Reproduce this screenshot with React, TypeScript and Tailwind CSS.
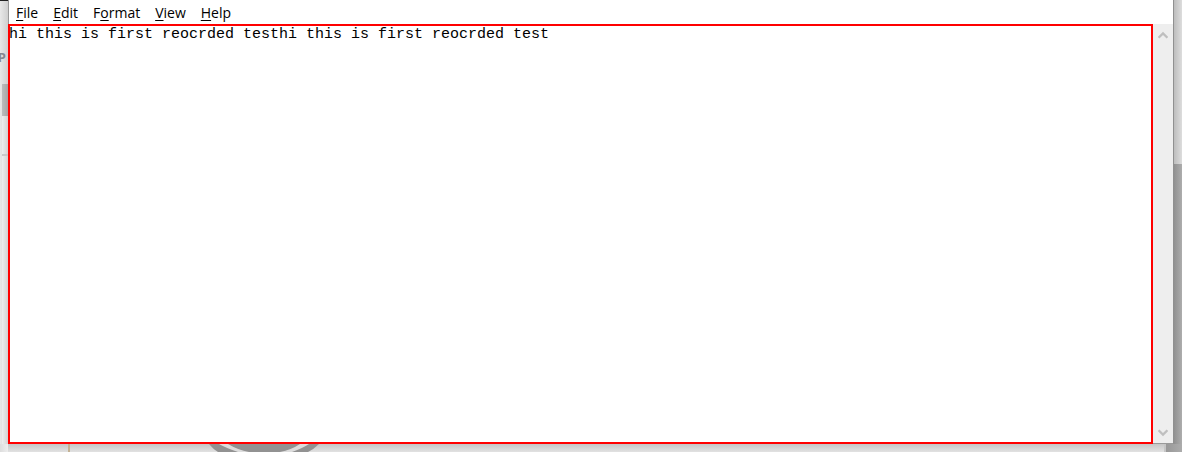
import React from "react";

const menus = [
  { before: "", key: "F", after: "ile" },
  { before: "", key: "E", after: "dit" },
  { before: "F", key: "o", after: "rmat" },
  { before: "", key: "V", after: "iew" },
  { before: "", key: "H", after: "elp" },
];

function MenuBar() {
  return (
    <nav aria-label="Menu" className="flex h-6 shrink-0 gap-[15px] border-l border-[#999999] bg-white pl-[7px] font-['Open_Sans',sans-serif] text-[14px] leading-[25px] text-black">
      {menus.map((m) => (
        <button key={m.key} type="button" className="whitespace-nowrap">
          {m.before}
          <span className="underline decoration-1 underline-offset-2">{m.key}</span>
          {m.after}
        </button>
      ))}
    </nav>
  );
}

function Chevron({ down = false }: { down?: boolean }) {
  return (
    <svg viewBox="0 0 10 8" className="h-2 w-[10px]" fill="none" stroke="#bfbfbf" strokeWidth="2.2" aria-hidden="true">
      <path d={down ? "M0.6 1.2 L5 5.6 L9.4 1.2" : "M0.6 6.8 L5 2.4 L9.4 6.8"} />
    </svg>
  );
}

function ScrollBar() {
  return (
    <div className="flex w-5 shrink-0 flex-col items-center justify-between border-b border-[#999999] bg-[#eeeeee] pt-[7px] pb-[6px]">
      <button type="button" aria-label="Scroll up"><Chevron /></button>
      <button type="button" aria-label="Scroll down"><Chevron down /></button>
    </div>
  );
}

function LeftBackdrop() {
  return (
    <div className="flex w-2 shrink-0 flex-col overflow-hidden border-t border-[#222222] bg-linear-to-r from-[#e8e8e8] to-[#cfcfcf]">
      <div className="flex h-[83px] shrink-0 justify-end pt-12 pr-[2px] font-['Open_Sans',sans-serif] text-[13px] font-bold leading-4 text-[#858890]">P</div>
      <div className="ml-[2px] h-8 shrink-0 bg-linear-to-r from-[#bdbdbd] to-[#a5a5a5]" />
      <div className="ml-[2px] h-10 shrink-0 border-b-2 border-[#c8c8c8] bg-linear-to-r from-[#eeeeee] to-[#d2d2d2]" />
      <div className="ml-[2px] flex-1 bg-linear-to-r from-[#eeeeee] to-[#d2d2d2]" />
    </div>
  );
}

function BottomBackdrop() {
  return (
    <div className="flex h-2 shrink-0 overflow-hidden bg-linear-to-b from-[#c6c6c6] to-[#e2e2e2]">
      <div className="w-2 shrink-0 bg-linear-to-r from-[#dddddd] to-[#eeeeee]" />
      <div className="w-[60px] shrink-0" />
      <div className="w-[2px] shrink-0 bg-[#c4b293]" />
      <div className="w-[138px] shrink-0" />
      <svg viewBox="0 0 112 8" className="h-2 w-28 shrink-0" aria-hidden="true">
        <path d="M1 0 Q5 5 10 8 H100 Q106 5 111 0Z" fill="#929292" />
        <path d="M20 0 Q30 6 41 8 H30 Q18 4 11 0Z M92 0 Q83 6 72 8 H84 Q95 4 101 0Z" fill="#dddddd" />
      </svg>
      <div className="flex-1" />
      <div className="w-[2px] shrink-0 bg-[#c5c5c5]" />
      <div className="w-4 shrink-0 bg-linear-to-r from-[#989898] to-[#acacac]" />
    </div>
  );
}

export default function App() {
  return (
    <div className="min-h-screen bg-white">
      <div className="flex h-[calc(100vh-16px)] flex-col overflow-hidden">
        <div className="flex min-h-0 flex-1">
          <LeftBackdrop />
          <main className="flex min-w-0 flex-1 flex-col bg-white">
            <MenuBar />
            <div className="flex min-h-0 flex-1">
              <textarea
                aria-label="Text editor"
                spellCheck={false}
                wrap="off"
                defaultValue="hi this is first reocrded testhi this is first reocrded test"
                className="min-w-0 flex-1 resize-none overflow-hidden bg-white pt-[2px] pl-px font-['Liberation_Mono',monospace] text-[15px] leading-[18px] text-black outline-2 -outline-offset-2 outline-[#ff0000]"
              />
              <ScrollBar />
            </div>
          </main>
          <div className="flex w-[9px] shrink-0 flex-col border-l border-[#909090]">
            <div className="h-[164px] bg-linear-to-r from-[#bdbdbd] to-[#dddddd]" />
            <div className="flex-1 bg-linear-to-r from-[#919191] to-[#adadad]" />
          </div>
        </div>
        <BottomBackdrop />
      </div>
    </div>
  );
}
